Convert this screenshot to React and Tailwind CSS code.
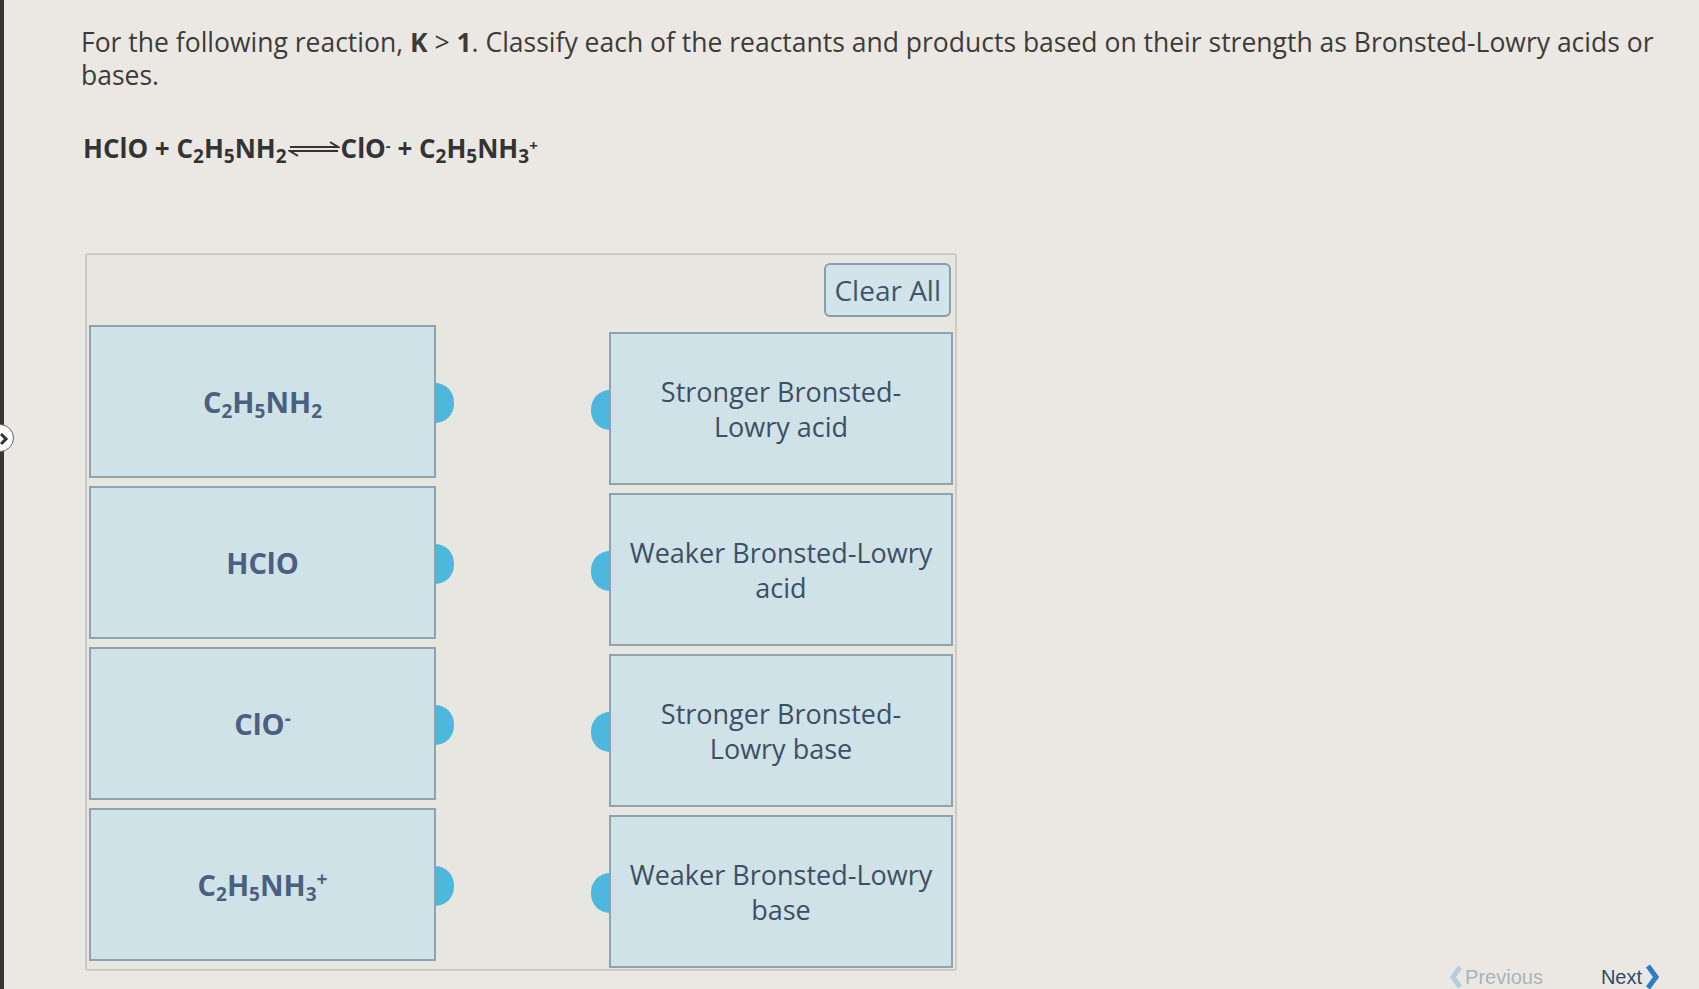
import React from "react";

const font = { fontFamily: '"Open Sans", "Liberation Sans", sans-serif' };

function Formula({ children }) {
  return <span className="font-bold text-[29px] text-[#4b5f80]">{children}</span>;
}

function LeftBox({ children }) {
  return (
    <div className="relative h-[153px] w-[347px] bg-[#cfe2e8] border-2 border-[#8ea3ab] flex items-center justify-center">
      <div>{children}</div>
      <div className="absolute right-[-20px] top-[56px] h-[40px] w-[19px] rounded-r-full bg-[#4db7dd]" />
    </div>
  );
}

function RightBox({ children }) {
  return (
    <div className="relative h-[153px] w-[344px] bg-[#cfe2e8] border-2 border-[#8ea3ab] flex items-center justify-center">
      <div className="text-center text-[27px] leading-[35px] text-[#3e4f63] px-2">{children}</div>
      <div className="absolute left-[-20px] top-[56px] h-[40px] w-[19px] rounded-l-full bg-[#4db7dd]" />
    </div>
  );
}

const sub = "text-[19px]";

export default function App() {
  return (
    <div style={font} className="w-[1699px] h-[989px] bg-[#ebe8e3] flex overflow-hidden relative">
      <div className="w-[4px] h-full bg-[#3a3532] relative">
        <div className="absolute top-[424px] left-[-14px] w-[28px] h-[28px] rounded-full bg-white border border-[#6b6360]">
          <svg width="28" height="28" viewBox="0 0 28 28"><path d="M14 9 L19 14 L14 19" stroke="#333" strokeWidth="3" fill="none" /></svg>
        </div>
      </div>
      <div className="flex-1 pl-[77px] pr-[30px] pt-[26px]">
        <p className="text-[26.5px] leading-[33px] text-[#3c3b3a]">
          For the following reaction, <b>K</b> &gt; <b>1</b>. Classify each of the reactants and products based on their strength as Bronsted-Lowry acids or bases.
        </p>
        <div className="mt-[37px] ml-[2px] text-[26px] font-bold text-[#333] flex items-baseline">
          <span>HClO + C<sub className={sub}>2</sub>H<sub className={sub}>5</sub>NH<sub className={sub}>2</sub></span>
          <svg width="52" height="16" viewBox="0 0 52 16" className="mx-[1px] self-center">
            <path d="M2 6 H50 L42 1" stroke="#333" strokeWidth="2" fill="none" />
            <path d="M50 10 H2 L10 15" stroke="#333" strokeWidth="2" fill="none" />
          </svg>
          <span>ClO<sup className="text-[15px]">-</sup> + C<sub className={sub}>2</sub>H<sub className={sub}>5</sub>NH<sub className={sub}>3</sub><sup className="text-[15px]">+</sup></span>
        </div>

        <div className="mt-[85px] ml-[4px] w-[872px] h-[718px] border-2 border-[#cdcac5] bg-[#e8e6e1] rounded-[3px] px-[2px] flex flex-col">
          <div className="h-[70px] flex items-center justify-end pr-[2px]">
            <button className="h-[54px] px-[8px] rounded-[6px] bg-[#d2e4e9] border-2 border-[#86a0a9] text-[28px] text-[#3f566a]">Clear All</button>
          </div>
          <div className="flex justify-between">
            <div className="flex flex-col gap-[8px]">
              <LeftBox><Formula>C<sub className={sub}>2</sub>H<sub className={sub}>5</sub>NH<sub className={sub}>2</sub></Formula></LeftBox>
              <LeftBox><Formula>HClO</Formula></LeftBox>
              <LeftBox><Formula>ClO<sup className={sub}>-</sup></Formula></LeftBox>
              <LeftBox><Formula>C<sub className={sub}>2</sub>H<sub className={sub}>5</sub>NH<sub className={sub}>3</sub><sup className={sub}>+</sup></Formula></LeftBox>
            </div>
            <div className="flex flex-col gap-[8px] mt-[7px]">
              <RightBox>Stronger Bronsted-<br />Lowry acid</RightBox>
              <RightBox>Weaker Bronsted-Lowry<br />acid</RightBox>
              <RightBox>Stronger Bronsted-<br />Lowry base</RightBox>
              <RightBox>Weaker Bronsted-Lowry<br />base</RightBox>
            </div>
          </div>
        </div>
      </div>
      <div className="absolute bottom-[-3px] right-[40px] flex items-center gap-[58px] text-[20px]" style={{ fontFamily: '"Liberation Sans", Arial, sans-serif' }}>
        <div className="flex items-center gap-[3px] text-[#a9b4bb]">
          <svg width="12" height="24" viewBox="0 0 12 24"><path d="M10 2 L3 12 L10 22" stroke="#b9cdd6" strokeWidth="5" fill="none" /></svg>
          Previous
        </div>
        <div className="flex items-center gap-[3px] text-[#2f4a6b]">
          Next
          <svg width="14" height="26" viewBox="0 0 14 26"><path d="M3 2 L11 13 L3 24" stroke="#2c7fc4" strokeWidth="5" fill="none" /></svg>
        </div>
      </div>
    </div>
  );
}
